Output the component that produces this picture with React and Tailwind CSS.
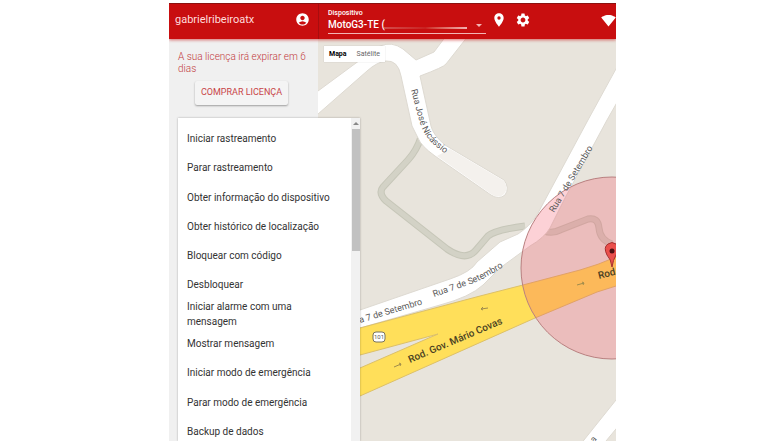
import { MdAccountCircle, MdPlace, MdSettings, MdSignalWifi4Bar } from "react-icons/md";

const commands = [
  "Iniciar rastreamento",
  "Parar rastreamento",
  "Obter informação do dispositivo",
  "Obter histórico de localização",
  "Bloquear com código",
  "Desbloquear",
  "Iniciar alarme com uma mensagem",
  "Mostrar mensagem",
  "Iniciar modo de emergência",
  "Parar modo de emergência",
  "Backup de dados",
];

function Header() {
  return (
    <header className="relative z-20 flex h-9 shrink-0 border-t border-[#8c1210] bg-[#c80e0f] text-white shadow-[0_1px_3px_rgba(200,14,15,0.6)]">
      <div className="flex w-[150px] shrink-0 items-center justify-between border-r border-[#a80d0e] pr-2 pb-1 pl-1.5">
        <span className="text-[11px] leading-4 text-[#ffdcdc]">gabrielribeiroatx</span>
        <button type="button" aria-label="Conta" className="text-[15px]">
          <MdAccountCircle />
        </button>
      </div>
      <div className="flex min-w-0 flex-1 items-start overflow-hidden pl-[9px]">
        <div className="flex w-[158px] shrink-0 flex-col pt-[5px]">
          <label htmlFor="device" className="text-[7px] leading-2 font-medium">
            Dispositivo
          </label>
          <div className="relative border-b border-[#f3b5b5]">
            <select
              id="device"
              className="block h-4 w-full appearance-none bg-transparent text-[10px] leading-4 font-medium outline-none"
            >
              <option>MotoG3-TE (</option>
            </select>
            <span className="pointer-events-none absolute bottom-1 left-14 h-0.5 w-[83px] bg-linear-to-r from-[#d34b4b] via-[#c92020] to-[#f0b0b0]" />
            <span className="pointer-events-none absolute right-1 bottom-1.5 border-x-[3px] border-t-[3px] border-x-transparent border-t-[#f3b5b5]" />
          </div>
        </div>
        <div className="flex h-8 flex-1 items-center gap-2 pl-[5px] text-[16px]">
          <button type="button" aria-label="Localizar">
            <MdPlace />
          </button>
          <button type="button" aria-label="Configurações">
            <MdSettings />
          </button>
        </div>
        <button type="button" aria-label="Wi-Fi" className="flex h-8 items-center text-[15px]">
          <MdSignalWifi4Bar />
        </button>
      </div>
    </header>
  );
}

function Sidebar() {
  return (
    <aside className="z-10 flex w-[149px] shrink-0 flex-col bg-[#f0f0f0] pt-3 pl-[9px]">
      <p className="text-[10px] leading-3 font-light whitespace-nowrap text-[#c23a3c]">
        A sua licença irá expirar em 6<br />
        dias
      </p>
      <button
        type="button"
        className="mt-1.5 mr-[30px] ml-[17px] h-6 shrink-0 rounded-xs bg-[#f4f4f4] text-[9px] whitespace-nowrap text-[#c84548] shadow-[0_1px_2px_rgba(0,0,0,0.35)]"
      >
        COMPRAR LICENÇA
      </button>
      <div className="mt-[13px] flex min-h-0 w-[182px] flex-1 overflow-hidden bg-white shadow-[0_0_2px_rgba(0,0,0,0.3)]">
        <ul className="grid h-[328px] flex-1 auto-rows-fr pt-1.5 pl-[9px]">
          {commands.map((c) => (
            <li key={c} className="flex items-center">
              <button type="button" className="w-[145px] text-left text-[10px] leading-[15px] text-[#333]">
                {c}
              </button>
            </li>
          ))}
        </ul>
        <div className="flex w-[9px] flex-col items-center bg-[#f1f1f1]">
          <span className="my-1 border-x-[3px] border-b-[3px] border-x-transparent border-b-[#888]" />
          <span className="h-[122px] w-2 bg-[#c1c1c1]" />
        </div>
      </div>
    </aside>
  );
}

const setembro =
  "M316 342 L360 328 L440 305 Q470 297 483 285 L500 268 L530 246 Q544 238 550 228 L565 198 L607 120 L640 62 L640 25 L588 120 L537 215 Q530 226 518 234 L500 242 L477 262 Q471 272 450 279 L360 310 L316 324 Z";
const highway =
  "M316 339 L360 328 L480 296 L523 285 L580 270 Q598 265 616 257 L640 248 L640 276 L616 286 L597 292 L535 318 L360 396 L316 416 L316 383 L360 368 L438 334 L360 355 L316 366 Z";
const trail =
  "M421 137 Q417 150 408 160 L383 187 Q378 193 386 201 L447 249 Q466 262 476 250 L488 236 Q495 230 525 226 M544 231 Q552 234 560 230 L588 219 Q598 217 599 228 Q600 240 612 244";

function MapCanvas() {
  return (
    <svg className="h-full w-full" fontFamily="Roboto, 'Liberation Sans', sans-serif" fill="#5a5a5a" role="img" aria-label="Mapa">
      <defs>
        <path id="jose" d="M411 90 L419 120 Q423 134 432 143 L460 166" />
        <path id="setembroWest" d="M350 326 L440 299" />
        <path id="setembroMid" d="M434 297 L474 283 Q488 277 514 260" />
        <path id="setembroNorth" d="M554 213 L600 136" />
        <path id="covas" d="M410 363 L530 312" />
      </defs>
      <g transform="translate(-318 -39)">
        <path d={trail} fill="none" stroke="#c6c6b8" strokeWidth="7" />
        <path d={trail} fill="none" stroke="#d3d2c6" strokeWidth="5" />
        <g fill="#fff" stroke="#dedad2" strokeWidth="1">
          <path d="M300 106 L318 91 L356 63 L380 46 Q392 41 403 49 L416 60 L434 52 L446 36 L468 36 L446 64 Q444 67 420 76 L431 126 Q433 135 445 145 L504 180 Q510 188 505 195 Q499 200 491 195 L435 156 Q421 146 418 138 L412 126 L401 76 Q398 60 386 61 Q377 62 367 71 L318 114 L300 130 Z" />
          <path d={setembro} />
          <path d="M560 470 L616 400 L640 370 L640 400 L606 441 L580 470 Z" />
        </g>
        <path d="M450 149 L504 181 Q509 188 504 194 Q499 199 491 194 L437 156 Z" fill="#f4f1ed" />
        <path d={highway} fill="#ffdf5a" stroke="#dcc069" strokeWidth="1" />
        <circle cx="612" cy="268" r="91" fill="#f5465a" fillOpacity="0.25" stroke="#b98080" strokeWidth="1" />
        <g stroke="#a08c4c" strokeWidth="1" fill="none">
          <path d="M394 367 L401 364 M399 363 L401 364 L400 366" />
          <path d="M488 308 L481 309 M483 307 L481 309 L483 310" />
          <path d="M577 285 L584 283 M582 282 L584 283 L583 285" />
        </g>
        <g fontSize="9">
          <text><textPath href="#jose">Rua José Nicássio</textPath></text>
          <text><textPath href="#setembroWest">Rua 7 de Setembro</textPath></text>
          <text><textPath href="#setembroMid">Rua 7 de Setembro</textPath></text>
          <text><textPath href="#setembroNorth">Rua 7 de Setembro</textPath></text>
          <text x="594" y="443" transform="rotate(-50 594 443)">a</text>
        </g>
        <g fontSize="10" fontWeight="500" fill="#4a3f22">
          <text><textPath href="#covas">Rod. Gov. Mário Covas</textPath></text>
          <text x="599" y="279" transform="rotate(-14 599 279)">Rod</text>
        </g>
        <rect x="373" y="332" width="12" height="10" rx="3" fill="#fff" stroke="#77735f" strokeWidth="1" />
        <text x="379" y="339" fontSize="6" textAnchor="middle">101</text>
        <path d="M612 267 Q611 259 607 255 Q603 247 608 244 Q612 241 616 244 Q621 248 616 255 Q613 260 612 267 Z" fill="#ea4f4c" stroke="#a52f2f" strokeWidth="1" />
        <circle cx="612" cy="251" r="2.5" fill="#500f12" />
      </g>
    </svg>
  );
}

export default function App() {
  return (
    <div className="h-screen bg-white pt-[3px] pr-[166px] pl-[169px] font-['Roboto','Liberation_Sans',sans-serif]">
      <div className="flex h-full flex-col overflow-hidden">
        <Header />
        <div className="flex min-h-0 flex-1">
          <Sidebar />
          <main className="relative min-w-0 flex-1 overflow-hidden bg-[#e8e4dc]">
            <MapCanvas />
            <div className="absolute top-[7px] left-1.5 flex h-4 items-center gap-2.5 bg-white px-[5px] text-[7px] shadow-[0_0_1px_rgba(0,0,0,0.2)]">
              <button type="button" className="font-bold text-black">Mapa</button>
              <button type="button" className="text-[#666]">Satélite</button>
            </div>
          </main>
        </div>
      </div>
    </div>
  );
}
